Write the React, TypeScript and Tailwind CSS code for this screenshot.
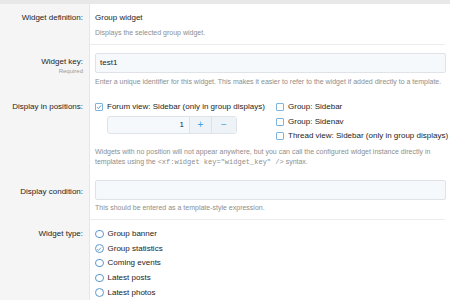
const Help = ({ children }: { children: React.ReactNode }) => (
  <div className="text-[7px] leading-[10px] text-[#8e8e8e]">{children}</div>
);

const Check = ({ checked, label }: { checked?: boolean; label: string }) => (
  <div className="flex items-center h-[14.5px] whitespace-nowrap">
    <span className="w-[8px] h-[8px] shrink-0 border border-[#7fb4df] rounded-[1px] mr-[4px] flex items-center justify-center bg-white">
      {checked && (
        <svg width="6" height="6" viewBox="0 0 6 6">
          <path d="M1 3.2 L2.5 4.6 L5 1.4" fill="none" stroke="#4b94cf" strokeWidth="0.9" />
        </svg>
      )}
    </span>
    <span className="text-[8px] text-[#1d1d1d]">{label}</span>
  </div>
);

const Radio = ({ checked, label }: { checked?: boolean; label: string }) => (
  <div className="flex items-center h-[14.7px] whitespace-nowrap">
    <span className="w-[8.5px] h-[8.5px] shrink-0 border border-[#5b98cb] rounded-full mr-[4px] flex items-center justify-center bg-white">
      {checked && (
        <svg width="6" height="6" viewBox="0 0 6 6">
          <path d="M1.2 3.1 L2.6 4.4 L4.9 1.7" fill="none" stroke="#5b98cb" strokeWidth="0.9" />
        </svg>
      )}
    </span>
    <span className="text-[8px] text-[#1d1d1d]">{label}</span>
  </div>
);

export default function App() {
  return (
    <div className="w-[450px] h-[300px] overflow-hidden bg-white font-['Liberation_Sans',Arial,sans-serif]">
      <div className="h-[4px] bg-[#e8e8e8]" />
      {/* definition */}
      <div className="flex">
        <div className="w-[90px] shrink-0 bg-[#f5f5f5] border-r border-[#e6e6e6] pr-[6px] pt-[8px] text-right">
          <div className="text-[8px] leading-[12px] text-[#1d1d1d]">Widget definition:</div>
        </div>
        <div className="flex-1 pr-[5px]">
          <div className="pl-[5px] pt-[8px] pb-[6px] border-b border-[#ececec]">
            <div className="text-[8px] leading-[12px] text-[#1d1d1d]">Group widget</div>
            <div className="mt-[4px]">
              <Help>Displays the selected group widget.</Help>
            </div>
          </div>
        </div>
      </div>
      {/* widget key */}
      <div className="flex">
        <div className="w-[90px] shrink-0 bg-[#f5f5f5] border-r border-[#e6e6e6] pr-[6px] pt-[12px] text-right">
          <div className="text-[8px] leading-[10px] text-[#1d1d1d]">Widget key:</div>
          <div className="text-[6px] leading-[8px] text-[#9a9a9a]">Required</div>
        </div>
        <div className="flex-1 pl-[5px] pr-[4px] pt-[8px]">
          <div className="h-[20px] border border-[#dfe3e8] rounded-[2px] bg-[#f6f9fc] flex items-center px-[4px] text-[8px] text-[#1d1d1d]">
            test1
          </div>
          <div className="mt-[4px] whitespace-nowrap">
            <Help>Enter a unique identifier for this widget. This makes it easier to refer to the widget if added directly to a template.</Help>
          </div>
        </div>
      </div>
      {/* positions */}
      <div className="flex">
        <div className="w-[90px] shrink-0 bg-[#f5f5f5] border-r border-[#e6e6e6] pr-[6px] pt-[14px] text-right">
          <div className="text-[8px] leading-[12px] text-[#1d1d1d]">Display in positions:</div>
        </div>
        <div className="flex-1 pl-[5px] pr-[4px] pt-[13px]">
          <div className="flex">
            <div className="w-[181px] shrink-0">
              <Check checked label="Forum view: Sidebar (only in group displays)" />
              <div className="ml-[12px] mt-[1px] w-[130px] h-[18px] flex border border-[#dfe3e8] rounded-[3px] bg-[#f6f9fc]">
                <div className="flex-1 text-right pr-[5px] text-[8px] leading-[16px] text-[#1d1d1d]">1</div>
                <div className="w-[22px] border-l border-[#dfe3e8] bg-[#eef3f8] flex items-center justify-center text-[10px] text-[#47a0dd]">+</div>
                <div className="w-[25px] border-l border-[#dfe3e8] bg-[#eef3f8] flex items-center justify-center text-[10px] text-[#47a0dd]">−</div>
              </div>
            </div>
            <div>
              <Check label="Group: Sidebar" />
              <Check label="Group: Sidenav" />
              <Check label="Thread view: Sidebar (only in group displays)" />
            </div>
          </div>
          <div className="mt-[3px] whitespace-nowrap">
            <Help>
              Widgets with no position will not appear anywhere, but you can call the configured widget instance directly in<br />templates using the{" "}
              <span className="font-['Liberation_Mono',monospace]">&lt;xf:widget key="widget_key" /&gt;</span> syntax.
            </Help>
          </div>
        </div>
      </div>
      {/* condition */}
      <div className="flex">
        <div className="w-[90px] shrink-0 bg-[#f5f5f5] border-r border-[#e6e6e6] pr-[6px] pt-[19px] text-right">
          <div className="text-[8px] leading-[12px] text-[#1d1d1d]">Display condition:</div>
        </div>
        <div className="flex-1 pr-[5px]">
          <div className="pl-[5px] pt-[13px] pb-[6px] border-b border-[#ececec]">
            <div className="h-[20px] mr-[-1px] border border-[#dfe3e8] rounded-[2px] bg-[#f6f9fc]" />
            <div className="mt-[3px]">
              <Help>This should be entered as a template-style expression.</Help>
            </div>
          </div>
        </div>
      </div>
      {/* type */}
      <div className="flex h-[100px]">
        <div className="w-[90px] shrink-0 bg-[#f5f5f5] border-r border-[#e6e6e6] pr-[6px] pt-[8px] text-right">
          <div className="text-[8px] leading-[12px] text-[#1d1d1d]">Widget type:</div>
        </div>
        <div className="flex-1 pl-[5px] pt-[7px]">
          <Radio label="Group banner" />
          <Radio checked label="Group statistics" />
          <Radio label="Coming events" />
          <Radio label="Latest posts" />
          <Radio label="Latest photos" />
        </div>
      </div>
    </div>
  );
}
